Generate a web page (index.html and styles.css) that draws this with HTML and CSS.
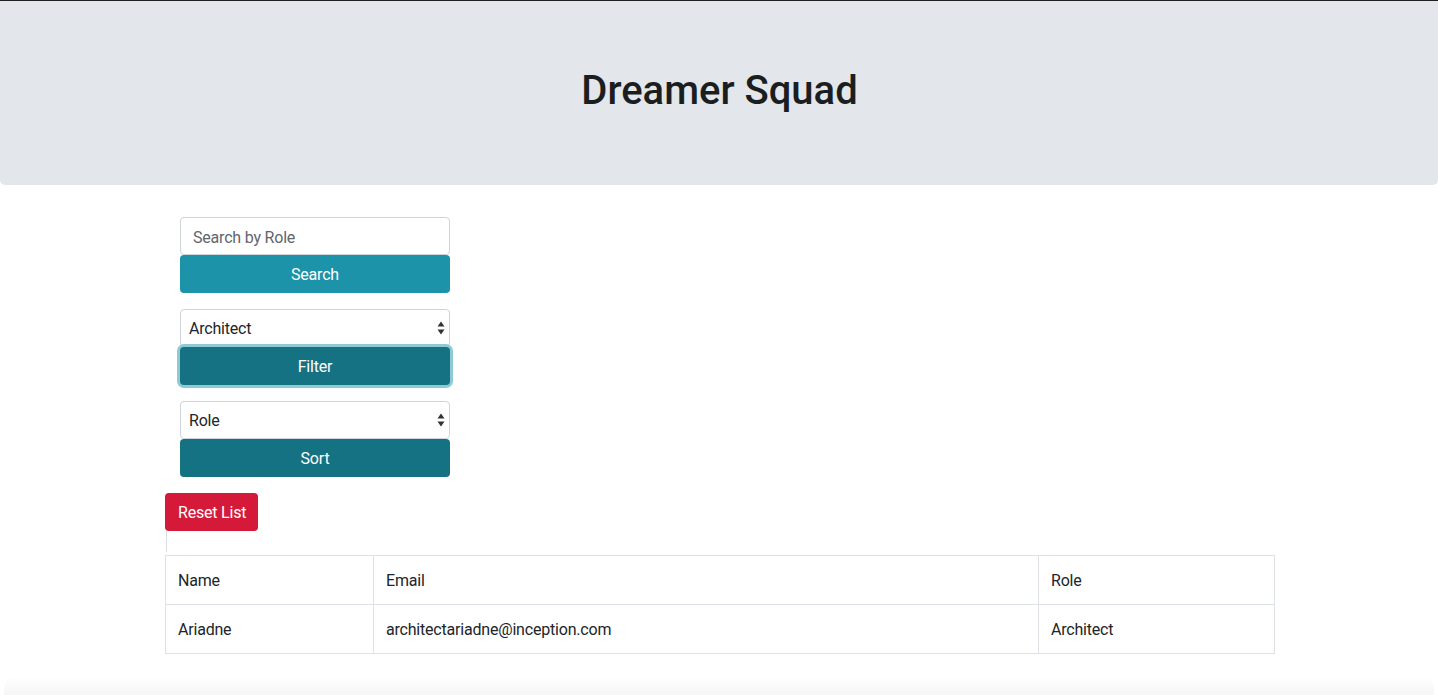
FILE: index.html
```html
<!DOCTYPE html>
<html lang="en">
<head>
<meta charset="utf-8">
<title>Dreamer Squad</title>
<link rel="stylesheet" href="styles.css">
</head>
<body>
<div class="page">
  <header class="jumbotron">
    <h1 class="title">Dreamer Squad</h1>
  </header>
  <main class="container">
    <div class="controls">
      <div class="group">
        <input class="field" type="text" placeholder="Search by Role">
        <button class="btn btn-info">Search</button>
      </div>
      <div class="group">
        <div class="select-wrap">
          <div class="field select">Architect</div>
          <svg class="arrows" width="8" height="14" viewBox="0 0 8 14"><path d="M4 0.5 L7.5 5.5 H0.5 Z M4 13.5 L7.5 8.5 H0.5 Z" fill="#333"/></svg>
        </div>
        <button class="btn btn-dark-info btn-focus">Filter</button>
      </div>
      <div class="group">
        <div class="select-wrap">
          <div class="field select">Role</div>
          <svg class="arrows" width="8" height="14" viewBox="0 0 8 14"><path d="M4 0.5 L7.5 5.5 H0.5 Z M4 13.5 L7.5 8.5 H0.5 Z" fill="#333"/></svg>
        </div>
        <button class="btn btn-dark-info">Sort</button>
      </div>
    </div>
    <button class="btn btn-danger">Reset List</button>
    <div class="rule"></div>
    <table class="table">
      <colgroup>
        <col class="c-name">
        <col class="c-email">
        <col class="c-role">
      </colgroup>
      <tr><td>Name</td><td>Email</td><td>Role</td></tr>
      <tr><td>Ariadne</td><td>architectariadne@inception.com</td><td>Architect</td></tr>
    </table>
  </main>
  <div class="bottom-shade"></div>
</div>
</body>
</html>
```

FILE: styles.css
```css
* { box-sizing: border-box; }
html, body { margin: 0; padding: 0; }
body {
  font-family: Roboto, "Liberation Sans", Arial, sans-serif;
  font-size: 16px;
  line-height: 1.5;
  letter-spacing: -0.2px;
  color: #212529;
  background: #fff;
  border-top: 1px solid #1e1e1e;
}
.page {
  min-height: 694px;
  display: flex;
  flex-direction: column;
}
.jumbotron {
  background: #e3e6ea;
  padding: 66px 32px 62px;
  border-radius: 0 0 5px 5px;
  margin-bottom: 32px;
}
.title {
  margin: 0 0 8px;
  text-align: center;
  font-size: 40px;
  font-weight: 500;
  line-height: 48px;
  letter-spacing: 0;
  color: #1b1e21;
  padding-left: 1px;
}
.container {
  width: 1110px;
  margin-left: calc(50% - 554px);
  display: flex;
  flex-direction: column;
  align-items: flex-start;
}
.controls {
  display: flex;
  flex-direction: column;
  gap: 16px;
  margin-left: 15px;
  width: 270px;
  margin-bottom: 16px;
}
.group { display: flex; flex-direction: column; }
.field {
  height: 38px;
  width: 100%;
  border: 1px solid #ced4da;
  border-radius: 4px;
  padding: 7px 12px 5px;
  font: inherit;
  letter-spacing: inherit;
  color: #495057;
  background: #fff;
}
.field::placeholder { color: #5f666d; }
.select-wrap { position: relative; }
.select { padding-left: 8px; color: #212529; }
.arrows { position: absolute; right: 5px; top: 12px; }
.btn {
  height: 38px;
  border: none;
  border-radius: 4px;
  font: inherit;
  letter-spacing: inherit;
  color: #fff;
  padding: 7px 12px 5px;
  text-align: center;
}
.btn-info { background: #1c93a9; }
.btn-dark-info { background: #157283; }
.btn-focus { box-shadow: 0 0 0 3px #8ccbd6; position: relative; }
.btn-danger { background: #d51a39; padding-left: 13px; padding-right: 12px; }
.rule {
  width: 1px;
  height: 21px;
  background: #dadde1;
  margin-left: 1px;
  margin-bottom: 3px;
}
.table {
  width: 1109px;
  border-collapse: collapse;
  table-layout: fixed;
}
.c-name { width: 208px; }
.c-email { width: 665px; }
.c-role { width: 236px; }
.table td {
  border: 1px solid #dee2e6;
  padding: 13px 12px 11px;
  height: 49px;
  vertical-align: middle;
}
.bottom-shade {
  margin-top: auto;
  height: 20px;
  margin-left: 4px;
  margin-right: 4px;
  border-radius: 14px 14px 0 0;
  background: linear-gradient(to bottom, #ffffff, #f6f6f6);
}
```
